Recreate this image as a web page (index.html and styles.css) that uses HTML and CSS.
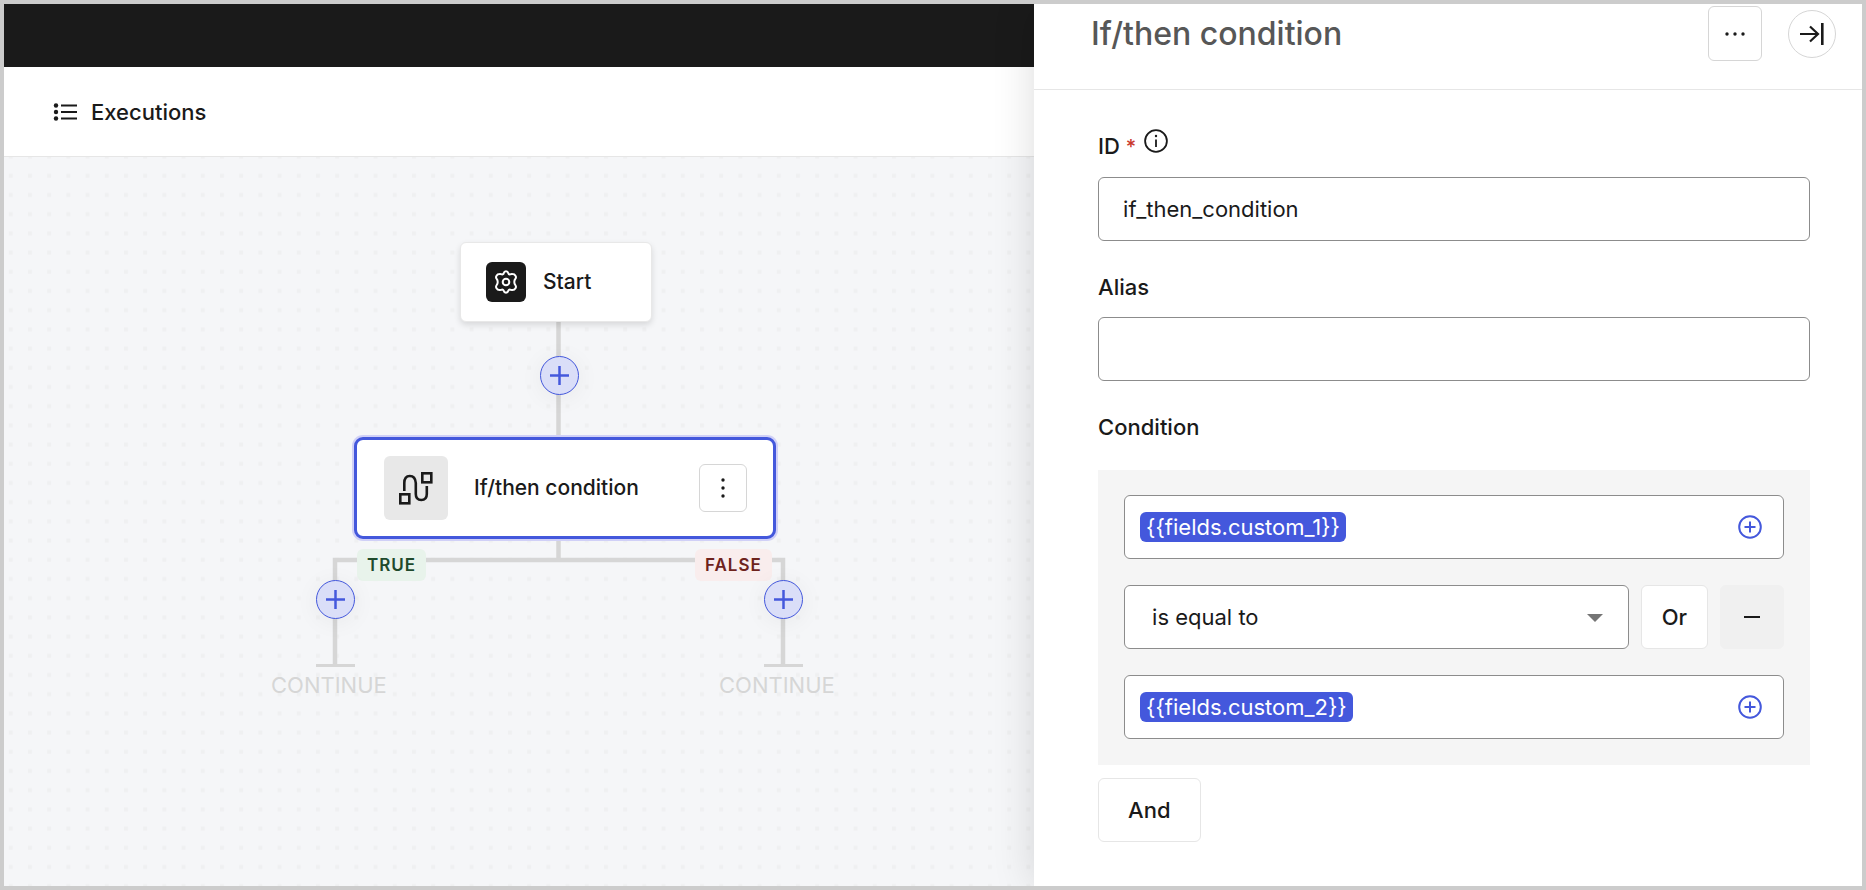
FILE: index.html
```html
<!DOCTYPE html>
<html lang="en">
<head>
    <meta charset="utf-8">
    <title>If/then condition</title>
    <link rel="stylesheet" href="styles.css">
</head>
<body>
    <div class="app">
        <main class="editor">
            <div class="topbar"></div>
            <nav class="toolbar">
                <a href="#" class="toolbar-link">
                    <svg width="26" height="20" viewBox="0 0 26 20" fill="none" stroke="#1a1a1a" stroke-width="2">
                        <path d="M9 3.500h16M9 10h16M9 16.500h16"/>
                        <g fill="#1a1a1a" stroke="none">
                            <circle cx="4" cy="3.500" r="2.200"/>
                            <circle cx="4" cy="10" r="2.200"/>
                            <circle cx="4" cy="16.500" r="2.200"/>
                        </g>
                    </svg>
                    <span>Executions</span>
                </a>
            </nav>

            <div class="canvas">
                <svg class="grid" width="100%" height="100%">
                    <defs>
                        <pattern id="dots" width="16" height="16" patternUnits="userSpaceOnUse" patternTransform="scale(1.2)">
                            <rect x="4" y="14" width="3.300" height="2" fill="#eff0f1"/>
                            <rect x="4" y="0" width="3.300" height="1.300" fill="#eff0f1"/>
                        </pattern>
                    </defs>
                    <rect width="100%" height="100%" fill="url(#dots)"/>
                </svg>

                <!-- connectors between the nodes -->
                <svg class="edges" width="1000" height="600" fill="none" stroke="#d6d6d6" stroke-width="4.500">
                    <path d="M554.500 160V405"/>
                    <path d="M331 508V403H779V508"/>
                    <path d="M312 508.500H351M760 508.500H799" stroke-width="3"/>
                </svg>

                <div class="node node-start">
                    <span class="node-icon dark">
                        <svg width="24" height="24" viewBox="0 0 24 24" fill="none" stroke="#fff" stroke-width="2" stroke-linejoin="round">
                            <path d="M9.700 3.200 Q10.200 1.300 12 1.300 T14.300 3.200 Q14.700 4.700 16.200 4.300 Q17.200 3.800 18.500 4 Q20.500 4 21.500 5.800 Q22.500 7.500 21.300 9 Q20.300 10 20.300 12 Q20.300 14 21.300 15 Q22.500 16.500 21.500 18.200 Q20.500 20 18.500 20 Q17.200 20.200 16.200 19.700 Q14.700 19.300 14.300 20.800 Q13.800 22.700 12 22.700 T9.700 20.800 Q9.300 19.300 7.800 19.700 Q6.800 20.200 5.500 20 Q3.500 20 2.500 18.200 Q1.500 16.500 2.700 15 Q3.700 14 3.700 12 Q3.700 10 2.700 9 Q1.500 7.500 2.500 5.800 Q3.500 4 5.500 4 Q6.800 3.800 7.800 4.300 Q9.300 4.700 9.700 3.200Z"/>
                            <circle cx="12" cy="12" r="3.300"/>
                        </svg>
                    </span>
                    <span>Start</span>
                </div>

                <button class="add add-main" aria-label="Add step">
                    <svg width="19" height="19" viewBox="0 0 19 19" stroke="#4458dc" stroke-width="2.500"><path d="M9.500 0V19M0 9.500H19"/></svg>
                </button>

                <div class="node node-condition">
                    <span class="node-icon light">
                        <svg width="36" height="34" viewBox="0 0 36 34" fill="none" stroke="#1a1a1a" stroke-width="2.600">
                            <rect x="24.300" y="2.300" width="9" height="9"/>
                            <rect x="2.300" y="23.300" width="9" height="9"/>
                            <path d="M6.300 20V12Q6.300 5 11.800 5T17.800 12V23Q17.800 29 23.300 29T28.800 23V15"/>
                        </svg>
                    </span>
                    <span>If/then condition</span>
                    <button class="node-menu" aria-label="Step options">
                        <svg width="4" height="20" viewBox="0 0 4 20" fill="#1a1a1a">
                            <circle cx="2" cy="2" r="1.700"/>
                            <circle cx="2" cy="10" r="1.700"/>
                            <circle cx="2" cy="18" r="1.700"/>
                        </svg>
                    </button>
                </div>

                <span class="branch branch-true">TRUE</span>
                <span class="branch branch-false">FALSE</span>

                <button class="add add-true" aria-label="Add step to true branch">
                    <svg width="19" height="19" viewBox="0 0 19 19" stroke="#4458dc" stroke-width="2.500"><path d="M9.500 0V19M0 9.500H19"/></svg>
                </button>
                <button class="add add-false" aria-label="Add step to false branch">
                    <svg width="19" height="19" viewBox="0 0 19 19" stroke="#4458dc" stroke-width="2.500"><path d="M9.500 0V19M0 9.500H19"/></svg>
                </button>

                <span class="end end-true">CONTINUE</span>
                <span class="end end-false">CONTINUE</span>
            </div>
        </main>

        <aside class="panel">
            <header class="panel-header">
                <h1>If/then condition</h1>
                <button class="more" aria-label="More">
                    <svg width="20" height="4" viewBox="0 0 20 4" fill="#1a1a1a">
                        <circle cx="2" cy="2" r="1.700"/>
                        <circle cx="10" cy="2" r="1.700"/>
                        <circle cx="18" cy="2" r="1.700"/>
                    </svg>
                </button>
                <button class="collapse" aria-label="Close panel">
                    <svg width="24" height="22" viewBox="0 0 24 22" fill="none" stroke="#1a1a1a" stroke-width="2.200">
                        <path d="M0 11H18M10 3.500L18 11L10 18.500"/>
                        <path d="M22.300 0V22" stroke-width="2.600"/>
                    </svg>
                </button>
            </header>

            <form class="panel-body">
                <div class="field">
                    <div class="label-row">
                        <label for="step-id">ID <span class="required">*</span></label>
                        <svg class="info" width="24" height="24" viewBox="0 0 24 24" fill="none" stroke="#1a1a1a" stroke-width="1.800">
                            <circle cx="12" cy="12" r="10.900"/>
                            <path d="M12 10.500V18"/>
                            <circle cx="12" cy="7" r="1.200" fill="#1a1a1a" stroke="none"/>
                        </svg>
                    </div>
                    <input type="text" id="step-id" value="if_then_condition">
                </div>

                <div class="field">
                    <label for="alias">Alias</label>
                    <input type="text" id="alias">
                </div>

                <div class="field">
                    <label for="operator">Condition</label>
                    <div class="condition">
                        <div class="token-input">
                            <span class="token">{{fields.custom_1}}</span>
                            <button type="button" class="insert" aria-label="Insert field">
                                <svg width="24" height="24" viewBox="0 0 24 24" fill="none" stroke="#4458dc" stroke-width="2">
                                    <circle cx="12" cy="12" r="10.800"/>
                                    <path d="M12 6.500V17.500M6.500 12H17.500"/>
                                </svg>
                            </button>
                        </div>
                        <div class="condition-row">
                            <div class="select">
                                <select id="operator">
                                    <option>is equal to</option>
                                    <option>is not equal to</option>
                                </select>
                            </div>
                            <button type="button" class="btn btn-or">Or</button>
                            <button type="button" class="btn btn-remove" aria-label="Remove condition">
                                <svg width="16" height="2" viewBox="0 0 16 2"><rect width="16" height="2" fill="#1a1a1a"/></svg>
                            </button>
                        </div>
                        <div class="token-input">
                            <span class="token">{{fields.custom_2}}</span>
                            <button type="button" class="insert" aria-label="Insert field">
                                <svg width="24" height="24" viewBox="0 0 24 24" fill="none" stroke="#4458dc" stroke-width="2">
                                    <circle cx="12" cy="12" r="10.800"/>
                                    <path d="M12 6.500V17.500M6.500 12H17.500"/>
                                </svg>
                            </button>
                        </div>
                    </div>
                    <button type="button" class="btn btn-and">And</button>
                </div>
            </form>
        </aside>
    </div>
</body>
</html>
```
FILE: styles.css
```css
* {
    box-sizing: border-box;
}

body {
    margin: 0;
    font-family: Inter, "Liberation Sans", sans-serif;
    font-size: 22px;
    line-height: 28px;
    color: #1a1a1a;
    background-color: #fff;
}

button, input, select {
    font: inherit;
    color: inherit;
}

button {
    display: flex;
    align-items: center;
    justify-content: center;
    padding: 0;
    cursor: pointer;
}

svg {
    display: block;
    flex-shrink: 0;
}

.app {
    display: flex;
    min-height: 100vh;
    border: 4px solid #ccc;
    overflow: hidden;
}

/* editor */
.editor {
    flex: 1;
    min-width: 0;
    display: flex;
    flex-direction: column;
}

.topbar {
    height: 63px;
    background-color: #1a1a1a;
}

.toolbar {
    display: flex;
    align-items: center;
    height: 90px;
    padding: 0 48px;
    border-bottom: 1px solid #e6e6e6;
}

.toolbar-link {
    display: flex;
    align-items: center;
    gap: 13px;
    color: inherit;
    font-weight: 500;
    text-decoration: none;
}

.canvas {
    position: relative;
    flex: 1;
    background-color: #f5f6f8;
    overflow: hidden;
}

.grid, .edges {
    position: absolute;
    top: 0;
    left: 0;
}

.node {
    position: absolute;
    display: flex;
    align-items: center;
    background-color: #fff;
    font-size: 21px;
    font-weight: 500;
}

.node-start {
    top: 85px;
    left: 456px;
    width: 192px;
    height: 80px;
    padding: 0 25px;
    gap: 17px;
    border: 1px solid #e8e8e8;
    border-radius: 6px;
    box-shadow: 0 3px 6px rgba(0, 0, 0, 0.12);
}

.node-condition {
    top: 280px;
    left: 350px;
    width: 422px;
    height: 102px;
    padding: 0 26px 0 27px;
    gap: 26px;
    border: 3px solid #4458dc;
    border-radius: 9px;
    box-shadow: 0 0 0 2px #d0d0f7;
}

.node-icon {
    display: flex;
    align-items: center;
    justify-content: center;
    border-radius: 6px;
}

.node-icon.dark {
    width: 40px;
    height: 40px;
    background-color: #1a1a1a;
}

.node-icon.light {
    width: 64px;
    height: 64px;
    background-color: #e8e8e8;
}

.node-menu {
    width: 48px;
    height: 48px;
    margin-left: auto;
    border: 1px solid #d6d6d6;
    border-radius: 6px;
    background-color: #fff;
}

.add {
    position: absolute;
    width: 39px;
    height: 39px;
    border: 1px solid #4458dc;
    border-radius: 50%;
    background-color: #dadef8;
    box-shadow: 0 3px 24px rgba(0, 0, 0, 0.06);
}

.add-main {
    top: 199px;
    left: 536px;
}

.add-true {
    top: 423px;
    left: 312px;
}

.add-false {
    top: 423px;
    left: 760px;
}

.branch {
    position: absolute;
    top: 392px;
    padding: 2px 10px;
    border-radius: 6px;
    font-size: 17px;
    font-weight: 600;
    letter-spacing: 1px;
}

.branch-true {
    left: 353px;
    background-color: #e8f3eb;
    color: #204a2c;
}

.branch-false {
    left: 691px;
    background-color: #f9eded;
    color: #6e231d;
}

.end {
    position: absolute;
    top: 514px;
    color: #d6d6d6;
}

.end-true {
    left: 267px;
}

.end-false {
    left: 715px;
}

/* side panel */
.panel {
    position: relative;
    width: 44.56%;
    background-color: #fff;
    box-shadow: 0 0 40px rgba(0, 0, 0, 0.14);
}

.panel-header {
    display: flex;
    align-items: center;
    gap: 26px;
    padding: 2px 26px 28px 57px;
    border-bottom: 1px solid #e6e6e6;
}

.panel-header h1 {
    flex: 1;
    margin: 0;
    font-size: 32px;
    font-weight: 500;
    line-height: 40px;
    color: #575757;
}

.more {
    width: 54px;
    height: 55px;
    border: 1px solid #d6d6d6;
    border-radius: 6px;
    background-color: #fff;
}

.collapse {
    width: 48px;
    height: 48px;
    border: 1px solid #d6d6d6;
    border-radius: 50%;
    background-color: #fff;
}

.panel-body {
    display: flex;
    flex-direction: column;
    gap: 32px;
    padding: 39px 52px 44px 64px;
}

.field label {
    display: block;
    margin-bottom: 16px;
    font-weight: 500;
}

.label-row {
    display: flex;
    gap: 8px;
}

.label-row label {
    padding-top: 3px;
}

.required {
    color: #c9372c;
    font-size: 20px;
}

.field input {
    display: block;
    width: 100%;
    height: 64px;
    padding: 0 24px;
    border: 1px solid #8c8c8c;
    border-radius: 6px;
    background-color: #fff;
}

.condition {
    display: flex;
    flex-direction: column;
    gap: 26px;
    margin-top: 29px;
    padding: 25px 26px 26px;
    background-color: #f5f5f5;
}

.token-input {
    display: flex;
    align-items: center;
    justify-content: space-between;
    height: 64px;
    padding: 0 21px 0 15px;
    border: 1px solid #8c8c8c;
    border-radius: 6px;
    background-color: #fff;
}

.token {
    padding: 1px 6px;
    border-radius: 6px;
    background-color: #4458dc;
    color: #fff;
}

.insert {
    border: none;
    background: none;
}

.condition-row {
    display: flex;
    gap: 12px;
}

.select {
    position: relative;
    flex: 1;
}

.select select {
    width: 100%;
    height: 64px;
    padding: 0 27px;
    border: 1px solid #8c8c8c;
    border-radius: 6px;
    background-color: #fff;
    appearance: none;
}

.select::after {
    content: "";
    position: absolute;
    top: 29px;
    right: 26px;
    border: 8px solid transparent;
    border-top-color: #757575;
    border-bottom: none;
    pointer-events: none;
}

.btn {
    height: 64px;
    border: 1px solid #e6e6e6;
    border-radius: 6px;
    background-color: #fff;
    font-weight: 500;
}

.btn-or {
    padding: 0 20px;
}

.btn-remove {
    width: 64px;
    border-color: #f0f0f0;
    background-color: #f0f0f0;
}

.btn-and {
    margin-top: 13px;
    padding: 0 29px;
}
```
